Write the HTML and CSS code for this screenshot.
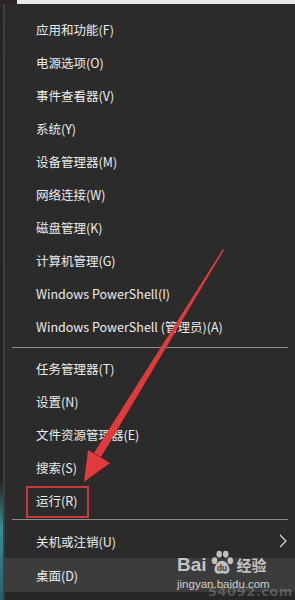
FILE: index.html
```html
<!DOCTYPE html>
<html lang="zh-CN">
<head>
<meta charset="utf-8">
<title>Win+X</title>
<link rel="stylesheet" href="styles.css">
</head>
<body>
<div class="screen">
  <div class="topbar"><span class="topdark"></span><span class="toplight"></span></div>
  <div class="frame">
    <div class="edge"></div>
    <div class="menu">
      <div class="group">
        <div class="item">应用和功能(F)</div>
        <div class="item">电源选项(O)</div>
        <div class="item">事件查看器(V)</div>
        <div class="item">系统(Y)</div>
        <div class="item">设备管理器(M)</div>
        <div class="item">网络连接(W)</div>
        <div class="item">磁盘管理(K)</div>
        <div class="item">计算机管理(G)</div>
        <div class="item">Windows PowerShell(I)</div>
        <div class="item">Windows PowerShell (管理员)(A)</div>
      </div>
      <div class="sep sep-a"><span></span></div>
      <div class="group">
        <div class="item">任务管理器(T)</div>
        <div class="item">设置(N)</div>
        <div class="item">文件资源管理器(E)</div>
        <div class="item">搜索(S)</div>
        <div class="item run">运行(R)<span class="redbox"></span></div>
      </div>
      <div class="sep sep-b"><span></span></div>
      <div class="group">
        <div class="item sub">关机或注销(U)
          <svg class="chev" width="8" height="14" viewBox="0 0 8 14"><path d="M1 1 L7 7 L1 13" fill="none" stroke="#d8d8d8" stroke-width="1.2"/></svg>
        </div>
        <div class="item active">桌面(D)</div>
      </div>
      <div class="bottom"></div>
    </div>
  </div>
  <svg class="arrow" width="295" height="600" viewBox="0 0 295 600">
    <path d="M223 249 L224 250 L101 457 L94 453 Z" fill="#e03a3c"/>
    <path d="M84 482 L88 450 L110 463 Z" fill="#e03a3c"/>
  </svg>
  <div class="watermark">
    <div class="wm-logo">
      <span class="wm-bai">Bai</span>
      <svg class="paw" width="26" height="27" viewBox="0 0 28 28">
        <ellipse cx="6" cy="12" rx="3" ry="3.6" fill="#d9d9d9"/>
        <ellipse cx="11" cy="5" rx="3" ry="3.6" fill="#d9d9d9"/>
        <ellipse cx="18" cy="5" rx="3" ry="3.6" fill="#d9d9d9"/>
        <ellipse cx="23" cy="12" rx="3" ry="3.6" fill="#d9d9d9"/>
        <path d="M14 12 C9 12 5 19 6 23 C7 27 11 26 14 25.5 C17 26 21 27 22 23 C23 19 19 12 14 12 Z" fill="#d9d9d9"/>
        <text x="14" y="23.5" text-anchor="middle" class="paw-du">du</text>
      </svg>
      <span class="wm-jy">经验</span>
    </div>
    <div class="wm-url">jingyan.baidu.com</div>
  </div>
  <div class="wm-site">54092.com</div>
</div>
</body>
</html>
```
FILE: styles.css
```css
html, body {
  margin: 0;
  padding: 0;
}
body {
  width: 295px;
  height: 600px;
  overflow: hidden;
  background: #1e1d1d;
  font-family: "Noto Sans CJK SC", "Noto Sans", sans-serif;
}
.screen {
  position: relative;
  width: 295px;
  height: 600px;
  display: flex;
  flex-direction: column;
  overflow: hidden;
}
.topbar {
  height: 4px;
  display: flex;
}
.topdark {
  width: 17px;
  background: #2a2422;
}
.toplight {
  flex: 1;
  background: #e8e8e8;
}
.frame {
  flex: 1;
  display: flex;
}
.edge {
  width: 3px;
  background: linear-gradient(#2a2624 0%, #262424 80%, #3b8d92 88%, #2b5e66 100%);
}
.menu {
  flex: 1;
  display: flex;
  flex-direction: column;
  background: #2b2b2b;
  border-left: 2px solid #3e3e3e;
  padding-top: 9px;
}
.group {
  display: flex;
  flex-direction: column;
}
.item {
  position: relative;
  height: 33px;
  display: flex;
  align-items: center;
  padding-left: 31px;
  color: #ececec;
  font-size: 12.5px;
  white-space: nowrap;
}
.item.active {
  height: 34px;
  background: #3c3c3c;
}
.sep {
  display: flex;
  align-items: center;
  padding: 0 7px 0 7px;
}
.sep span {
  flex: 1;
  height: 1px;
  background: #8c8c8c;
}
.sep-a {
  height: 9px;
}
.sep-b {
  height: 8px;
  align-items: flex-start;
  padding-top: 2px;
  box-sizing: border-box;
}
.chev {
  position: absolute;
  right: 8px;
  top: 9px;
}
.redbox {
  position: absolute;
  left: 21px;
  top: 2px;
  width: 59px;
  height: 28px;
  border: 2px solid #c8393b;
}
.bottom {
  flex: 1;
  background: #262626;
}
.arrow {
  position: absolute;
  left: 0;
  top: 0;
  pointer-events: none;
}
.watermark {
  position: absolute;
  left: 177px;
  top: 546px;
  display: flex;
  flex-direction: column;
  opacity: 0.85;
}
.wm-logo {
  display: flex;
  align-items: flex-end;
  height: 30px;
}
.wm-bai {
  font-family: "Liberation Sans", sans-serif;
  font-weight: bold;
  font-size: 19px;
  color: #dcdcdc;
  line-height: 20px;
  margin-bottom: 1px;
}
.paw {
  margin: 0 2px 0 2px;
}
.paw-du {
  font-family: "Liberation Sans", sans-serif;
  font-weight: bold;
  font-size: 9px;
  fill: #3a3a3a;
}
.wm-jy {
  font-size: 15px;
  font-weight: bold;
  color: #dcdcdc;
  line-height: 20px;
  margin-bottom: 1px;
}
.wm-url {
  font-family: "Liberation Sans", sans-serif;
  font-size: 11.5px;
  color: #e4e4e4;
  margin-top: 1px;
  line-height: 14px;
}
.wm-site {
  position: absolute;
  left: 208px;
  top: 585px;
  font-family: "DejaVu Sans", sans-serif;
  font-weight: bold;
  font-size: 13px;
  line-height: 14px;
  color: rgba(200,200,200,0.3);
  letter-spacing: 0.5px;
}
```
